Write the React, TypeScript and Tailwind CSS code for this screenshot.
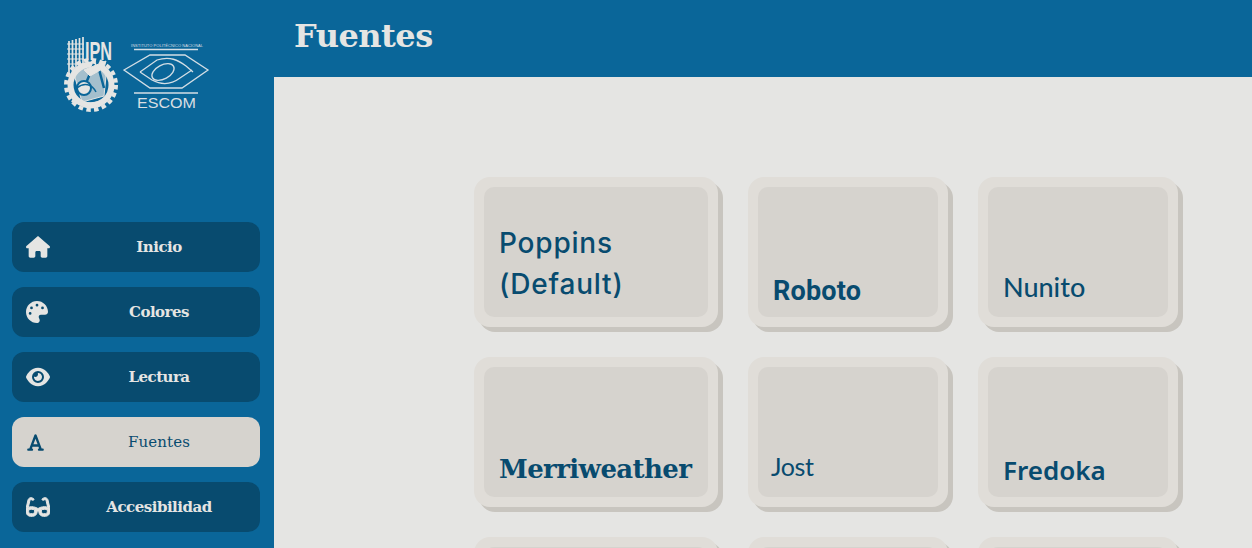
import React from "react";
import { FaHouse, FaPalette, FaEye, FaFont, FaGlasses } from "react-icons/fa6";

const serif = "font-['DejaVu_Serif',serif]";

function Logo() {
  return (
    <svg width="154" height="90" viewBox="60 30 154 90" fill="none" className="block">
      {/* IPN seal */}
      <g stroke="#e5e5e3">
        <circle cx="91" cy="85" r="25" strokeWidth="4" strokeDasharray="4.500 3.350" />
        <circle cx="91" cy="85" r="20.500" strokeWidth="6" />
        <path d="M74 74 L94 60 L106 76 L104 96 L82 102 Z" fill="#e5e5e3" fillOpacity="0.7" strokeWidth="1" />
        <path d="M97 62 L104 88 M94 64 L84 88" strokeWidth="2.500" stroke="#0a6699" />
        <path d="M84 70 L106 61 L104 68 L90 76 Z" fill="#e5e5e3" strokeWidth="1" />
        <circle cx="84" cy="88" r="7" strokeWidth="2" stroke="#0a6699" fill="#e5e5e3" />
        <path d="M77 88 C84 82 92 84 96 92" strokeWidth="1.500" stroke="#0a6699" />
        <path d="M72 100 C84 106 98 106 108 98" strokeWidth="4" />
      </g>
      <g stroke="#e5e5e3" strokeWidth="1.700">
        <path d="M69 41v32M72.500 40v34M76 39v32M79.500 38v30M83 37v30" />
        <path d="M67 44h17M67 49h17M67 54h17M67 59h17M67 64h17" strokeWidth="1" />
      </g>
      <text x="85" y="60" fill="#e5e5e3" fontFamily="'Liberation Sans Narrow','Liberation Sans',sans-serif" fontWeight="700" fontSize="26" textLength="27" lengthAdjust="spacingAndGlyphs">IPN</text>
      {/* ESCOM emblem */}
      <text x="131" y="47" fill="#d9dfe3" fontFamily="'Liberation Sans',sans-serif" fontSize="4" textLength="72">INSTITUTO POLITÉCNICO NACIONAL</text>
      <path d="M134 49.500h64M134 93h64" stroke="#d3dee5" strokeWidth="1.300" />
      <g stroke="#d3dee5" strokeWidth="1.300">
        <path d="M124 70 L150 55 H185 L208 70 L182 88 H150 Z" />
        <path d="M140 72 L157 60 C170 56 178 60 186 66 L193 72" />
        <path d="M140 72 L152 80 C163 86 172 84 180 78 L192 70" />
        <ellipse cx="163" cy="72" rx="12" ry="7" transform="rotate(-28 163 72)" />
      </g>
      <text x="137" y="108" fill="#d9dfe3" fontFamily="'Liberation Sans',sans-serif" fontSize="15" textLength="59" lengthAdjust="spacingAndGlyphs">ESCOM</text>
    </svg>
  );
}

const items = [
  { label: "Inicio", Icon: FaHouse, size: 24 },
  { label: "Colores", Icon: FaPalette, size: 22 },
  { label: "Lectura", Icon: FaEye, size: 24 },
  { label: "Fuentes", Icon: FaFont, size: 19, active: true },
  { label: "Accesibilidad", Icon: FaGlasses, size: 24, heavy: true },
];

type NavItemProps = {
  label: string;
  Icon: React.ComponentType<{ size?: number; strokeWidth?: number }>;
  size: number;
  active?: boolean;
  heavy?: boolean;
};

function NavItem({ label, Icon, size, active, heavy }: NavItemProps) {
  return (
    <a className={`flex h-[50px] items-center rounded-xl pl-[14px] ${active ? "bg-[#d6d3ce] text-[#084b6f]" : "bg-[#084b6f] text-[#e5e5e3]"}`}>
      <span className="flex w-[26px] shrink-0 items-center justify-start">
        <Icon size={size} strokeWidth={heavy ? 24 : 0} />
      </span>
      <span className={`flex-1 pl-[6px] text-center text-[15px] ${active ? "font-normal tracking-[0.1px]" : "font-semibold tracking-[-0.5px]"} ${serif}`}>{label}</span>
    </a>
  );
}

function FontCard({ label, font }: { label?: string; font?: string }) {
  return (
    <div className="h-[150px] rounded-2xl bg-[#e0ddd8] p-[10px] shadow-[5px_5px_0_#c8c5bf]">
      <div className="flex h-full items-end rounded-[10px] bg-[#d6d3ce] px-[15px] pb-[10px] text-[#084b6f]">
        {label && <span className={font}>{label}</span>}
      </div>
    </div>
  );
}

export default function App() {
  return (
    <div className="flex h-[548px] overflow-hidden bg-[#e5e5e3]">
      <aside className="flex w-[274px] shrink-0 flex-col bg-[#0a6699] pl-3 pr-[14px] pt-[30px]">
        <div className="flex justify-center pl-[2px]">
          <Logo />
        </div>
        <nav className="mt-[102px] flex flex-col gap-[15px]">
          {items.map((item) => (
            <NavItem key={item.label} {...item} />
          ))}
        </nav>
      </aside>
      <main className="min-w-0 flex-1">
        <header className={`flex h-[77px] items-start bg-[#0a6699] pl-5 pt-[13px] text-[32px] leading-[46px] font-bold tracking-[-0.5px] text-[#e5e5e3] ${serif}`}>
          Fuentes
        </header>
        <div className="grid grid-cols-[244px_200px_200px] gap-x-[30px] gap-y-[30px] pl-[200px] pt-[100px]">
          <FontCard label="Poppins (Default)" font="mb-[2px] font-['Inter',sans-serif] text-[28px] leading-[41px] font-medium tracking-[0.8px]" />
          <FontCard label="Roboto" font="font-['Roboto',sans-serif] text-[27px] leading-[32px] font-bold tracking-[0.2px]" />
          <FontCard label="Nunito" font="font-['Lato',sans-serif] text-[27px] leading-[40px] font-medium" />
          <FontCard label="Merriweather" font="font-['DejaVu_Serif',serif] text-[26px] leading-[36px] font-bold tracking-[-0.6px]" />
          <FontCard label="Jost" font="-ml-[2px] font-['Lato',sans-serif] text-[25px] leading-[42px] tracking-[-0.4px]" />
          <FontCard label="Fredoka" font="font-['Noto_Sans',sans-serif] text-[26px] leading-[34px] font-semibold" />
          <FontCard />
          <FontCard />
          <FontCard />
        </div>
      </main>
    </div>
  );
}
